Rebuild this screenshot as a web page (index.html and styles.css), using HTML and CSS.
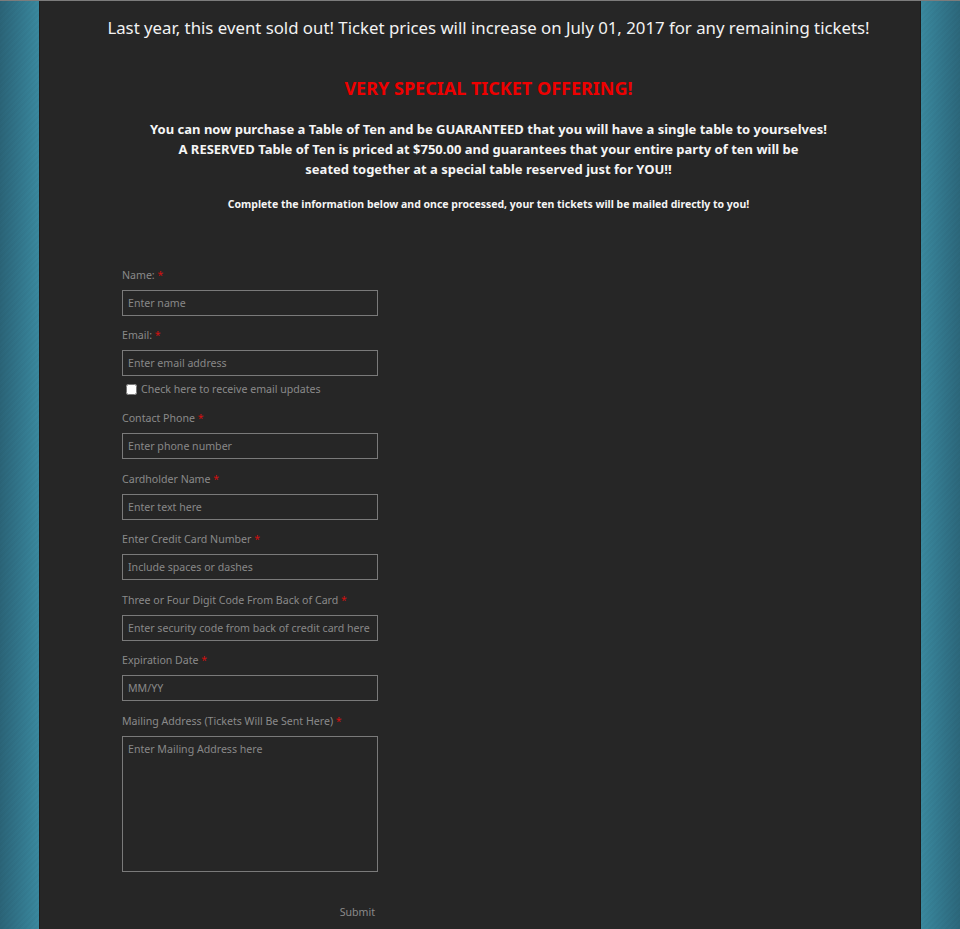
FILE: index.html
```html
<!DOCTYPE html>
<html lang="en">
<head>
<meta charset="utf-8">
<title>Table of Ten</title>
<link rel="stylesheet" href="styles.css">
</head>
<body>
<div class="page">
  <div class="header">
    <p class="notice">Last year, this event sold out! Ticket prices will increase on July 01, 2017 for any remaining tickets!</p>
    <h2 class="offer">VERY SPECIAL TICKET OFFERING!</h2>
    <p class="intro">You can now purchase a Table of Ten and be GUARANTEED that you will have a single table to yourselves!<br>A RESERVED Table of Ten is priced at $750.00 and guarantees that your entire party of ten will be<br>seated together at a special table reserved just for YOU!!</p>
    <p class="note">Complete the information below and once processed, your ten tickets will be mailed directly to you!</p>
  </div>

  <form class="form">
    <div class="field field-first">
      <label class="label">Name: <span class="req">*</span></label>
      <input class="input" type="text" placeholder="Enter name">
    </div>
    <div class="field field-check">
      <label class="label">Email: <span class="req">*</span></label>
      <input class="input" type="text" placeholder="Enter email address">
      <div class="check"><input class="checkbox" type="checkbox"><span>Check here to receive email updates</span></div>
    </div>
    <div class="field">
      <label class="label">Contact Phone <span class="req">*</span></label>
      <input class="input" type="text" placeholder="Enter phone number">
    </div>
    <div class="field">
      <label class="label">Cardholder Name <span class="req">*</span></label>
      <input class="input" type="text" placeholder="Enter text here">
    </div>
    <div class="field">
      <label class="label">Enter Credit Card Number <span class="req">*</span></label>
      <input class="input" type="text" placeholder="Include spaces or dashes">
    </div>
    <div class="field">
      <label class="label">Three or Four Digit Code From Back of Card <span class="req">*</span></label>
      <input class="input" type="text" placeholder="Enter security code from back of credit card here">
    </div>
    <div class="field">
      <label class="label">Expiration Date <span class="req">*</span></label>
      <input class="input" type="text" placeholder="MM/YY">
    </div>
    <div class="field">
      <label class="label">Mailing Address (Tickets Will Be Sent Here) <span class="req">*</span></label>
      <textarea class="textarea" placeholder="Enter Mailing Address here"></textarea>
    </div>
    <div class="actions"><button class="submit" type="button">Submit</button></div>
  </form>
</div>
</body>
</html>
```

FILE: styles.css
```css
html { border-top: 1px solid #7c7c7c; }
body {
  margin: 0;
  min-height: 928px;
  background:
    repeating-linear-gradient(135deg, rgba(0,0,0,0.025) 0 2px, rgba(0,0,0,0) 2px 4px),
    linear-gradient(90deg, #2b6478 0px, #3a899f 39px, #3a899f 921px, #2c677b 960px);
  font-family: "Noto Sans", "Open Sans", sans-serif;
}
.page {
  box-sizing: border-box;
  width: 882px;
  min-height: 928px;
  margin: 0 auto;
  padding: 1px 0 20px;
  background: #262626;
  border-left: 1px solid #1c1c1c;
  border-right: 1px solid #1c1c1c;
}
.header { padding-left: 17px; }
.notice {
  margin: 15px 0 0;
  text-align: center;
  color: #f2f2f2;
  font-size: 16.8px;
  line-height: 22px;
}
.offer {
  margin: 38px 0 0;
  text-align: center;
  color: #ee0000;
  font-size: 18px;
  line-height: 22px;
  font-weight: bold;
}
.intro {
  margin: 20px 0 0;
  text-align: center;
  color: #f5f5f5;
  font-size: 13px;
  line-height: 20px;
  font-weight: bold;
}
.note {
  margin: 18px 0 0;
  text-align: center;
  color: #f5f5f5;
  font-size: 10.5px;
  line-height: 14px;
  font-weight: bold;
}
.form {
  margin: 56px 0 0 82px;
  width: 256px;
}
.field { margin-bottom: 11.6px; }
.field-first { margin-bottom: 11px; }
.field-check { margin-bottom: 13px; }
.label {
  display: block;
  font-size: 10.6px;
  line-height: 16px;
  color: #8a8a8a;
  margin-bottom: 7px;
}
.req { color: #d01010; }
.input, .textarea {
  display: block;
  box-sizing: border-box;
  width: 256px;
  height: 26px;
  margin: 0;
  padding: 0 5px;
  background: #262626;
  border: 1px solid #7a7a7a;
  border-radius: 0;
  color: #cccccc;
  font-family: inherit;
  font-size: 10.6px;
  outline: none;
}
.textarea {
  height: 136px;
  padding: 5px;
  resize: none;
}
.input::placeholder, .textarea::placeholder { color: #888888; opacity: 1; }
.check {
  display: flex;
  align-items: center;
  margin-top: 5px;
  height: 16px;
  font-size: 10.6px;
  color: #8a8a8a;
}
.checkbox {
  width: 11px;
  height: 11px;
  margin: 0 4px 0 4px;
}
.actions {
  display: flex;
  justify-content: flex-end;
  margin-top: 27px;
}
.submit {
  background: none;
  border: none;
  padding: 6px 3px;
  color: #8a8a8a;
  font-family: inherit;
  font-size: 10.6px;
}
```
